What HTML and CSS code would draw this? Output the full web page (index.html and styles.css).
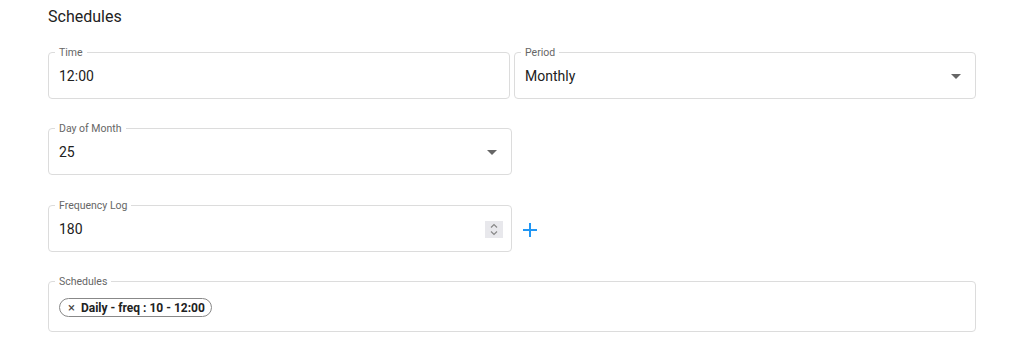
FILE: index.html
```html
<!DOCTYPE html>
<html lang="en">
<head>
    <meta charset="UTF-8">
    <meta name="viewport" content="width=device-width, initial-scale=1.0">
    <title>Schedules</title>
    <link rel="stylesheet" href="styles.css">
</head>
<body>

    <div class="schedules">
        <h2>Schedules</h2>

        <div class="row">
            <fieldset class="field">
                <legend>Time</legend>
                <div class="value">12:00</div>
            </fieldset>

            <fieldset class="field">
                <legend>Period</legend>
                <div class="value">
                    <span>Monthly</span>
                    <svg class="arrow" viewBox="0 0 24 24"><path d="M7 10l5 5 5-5z"/></svg>
                </div>
            </fieldset>
        </div>

        <div class="row single">
            <fieldset class="field">
                <legend>Day of Month</legend>
                <div class="value">
                    <span>25</span>
                    <svg class="arrow" viewBox="0 0 24 24"><path d="M7 10l5 5 5-5z"/></svg>
                </div>
            </fieldset>
        </div>

        <div class="row single last">
            <fieldset class="field">
                <legend>Frequency Log</legend>
                <div class="value">
                    <span>180</span>
                    <span class="spinner">
                        <svg viewBox="0 0 18 17"><path d="M6 6.5l3-3 3 3M6 10.5l3 3 3-3"/></svg>
                    </span>
                </div>
            </fieldset>

            <div class="add">
                <svg viewBox="0 0 14 14"><path d="M7 0v14M0 7h14"/></svg>
            </div>
        </div>

        <fieldset class="field wide">
            <legend>Schedules</legend>
            <div class="chips">
                <span class="chip"><span class="chip-x">&times;</span>Daily - freq : 10 - 12:00</span>
            </div>
        </fieldset>
    </div>

</body>
</html>
```

FILE: styles.css
```css
body {
    font-family: Roboto, "Liberation Sans", Arial, sans-serif;
    background-color: #fff;
    color: #212121;
    margin: 0;
}

.schedules {
    padding: 5px 48px;
}

.schedules h2 {
    font-size: 16px;
    font-weight: 400;
    line-height: 24px;
    margin: 0 0 17px;
    color: #222;
}

.row {
    display: grid;
    grid-template-columns: 462px 462px;
    column-gap: 4px;
    margin-bottom: 23px;
}

.row.single {
    grid-template-columns: 464px auto;
    column-gap: 0;
    margin-bottom: 24px;
}

.row.last {
    margin-bottom: 23px;
}

.field {
    margin: 0;
    padding: 0;
    border: 1px solid #dcdcdc;
    border-radius: 4px;
    min-width: 0;
}

.field legend {
    font-size: 10.5px;
    line-height: 13px;
    color: #666;
    padding: 0 4px;
    margin-left: 6px;
}

.value {
    display: flex;
    align-items: center;
    justify-content: space-between;
    height: 20px;
    padding: 7px 7px 12px 10px;
    font-size: 14px;
    line-height: 20px;
}

.arrow {
    width: 24px;
    height: 24px;
    fill: #666;
}

.spinner {
    display: flex;
    width: 18px;
    height: 17px;
    margin-right: 1px;
    background-color: #e8e8ec;
}

.spinner svg {
    width: 18px;
    height: 17px;
    fill: none;
    stroke: #888;
    stroke-width: 1.2;
}

.add {
    display: flex;
    align-items: center;
    padding: 9px 0 0 11px;
}

.add svg {
    width: 14px;
    height: 14px;
    stroke: #2196f3;
    stroke-width: 2;
}

.wide {
    box-sizing: border-box;
    width: 928px;
}

.chips {
    height: 47px;
    padding: 0 10px;
    display: flex;
    align-items: center;
    margin-top: -4px;
}

.chip {
    display: inline-flex;
    align-items: center;
    height: 17px;
    padding: 0 6px 0 8px;
    border: 1px solid #888;
    border-radius: 10px;
    font-size: 12px;
    font-weight: 700;
    color: #222;
}

.chip-x {
    font-weight: 400;
    font-size: 13px;
    color: #444;
    margin-right: 6px;
}
```
